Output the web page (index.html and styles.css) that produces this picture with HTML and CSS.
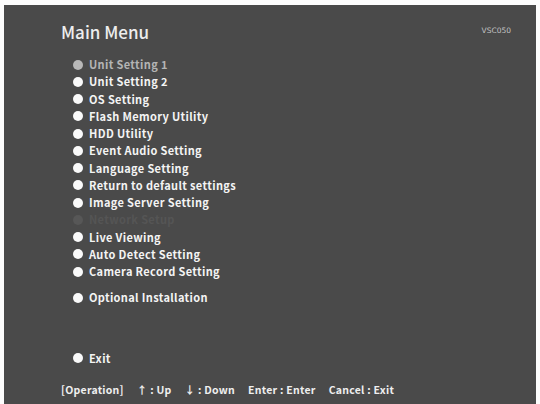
FILE: index.html
```html
<!DOCTYPE html>
<html lang="en">
<head>
    <meta charset="UTF-8">
    <title>Main Menu</title>
    <link rel="stylesheet" href="styles.css">
</head>
<body>
    <div class="screen">
        <div class="header">
            <h1>Main Menu</h1>
            <span class="model">VSC050</span>
        </div>

        <!-- menu entries -->
        <ul class="menu">
            <li class="current">Unit Setting 1</li>
            <li>Unit Setting 2</li>
            <li>OS Setting</li>
            <li>Flash Memory Utility</li>
            <li>HDD Utility</li>
            <li>Event Audio Setting</li>
            <li>Language Setting</li>
            <li>Return to default settings</li>
            <li>Image Server Setting</li>
            <li class="disabled">Network Setup</li>
            <li>Live Viewing</li>
            <li>Auto Detect Setting</li>
            <li>Camera Record Setting</li>
            <li class="optional">Optional Installation</li>
            <li class="exit">Exit</li>
        </ul>

        <div class="footer">
            <span>[Operation]</span>
            <span>&#8593; : Up</span>
            <span>&#8595; : Down</span>
            <span>Enter : Enter</span>
            <span>Cancel : Exit</span>
        </div>
    </div>
</body>
</html>
```

FILE: styles.css
```css
body {
    margin: 0;
    background: #fdfdfd;
    font-family: "Noto Sans CJK JP", "Noto Sans", sans-serif;
}
.screen {
    margin: 5px 0 0 4px;
    width: 532px;
    height: 399px;
    background: #4a4a4a;
    color: #f4f4f4;
    padding: 0 0 0 57px;
    box-sizing: border-box;
    display: flex;
    flex-direction: column;
}
.header {
    display: flex;
    justify-content: space-between;
    align-items: flex-start;
    padding-top: 15px;
    padding-right: 25px;
}
h1 {
    margin: 0;
    font-size: 17px;
    font-weight: 500;
    line-height: 24px;
    color: #ededed;
}
.model {
    font-family: "DejaVu Sans", sans-serif;
    font-size: 7.5px;
    color: #c4c4c4;
    margin-top: 6px;
}
.menu {
    list-style: none;
    margin: 12px 0 0 0;
    padding: 0 0 0 12px;
}
.menu li {
    height: 17.25px;
    line-height: 17.25px;
    font-size: 11px;
    font-weight: 700;
    letter-spacing: 0.35px;
    display: flex;
    align-items: center;
    gap: 6px;
}
.menu li::before {
    content: "";
    width: 10px;
    height: 10px;
    border-radius: 50%;
    background: #fafafa;
    flex: none;
}
.menu li.current {
    color: #b4b4b4;
}
.menu li.current::before {
    background: #b8b8b8;
}
.menu li.disabled {
    color: #555555;
}
.menu li.disabled::before {
    background: #575757;
}
.menu li.optional {
    margin-top: 9px;
}
.menu li.exit {
    margin-top: 43px;
}
.footer {
    display: flex;
    gap: 13px;
    margin-top: 15px;
    font-size: 10.5px;
    font-weight: 700;
    letter-spacing: 0.25px;
    color: #efefef;
}
```
